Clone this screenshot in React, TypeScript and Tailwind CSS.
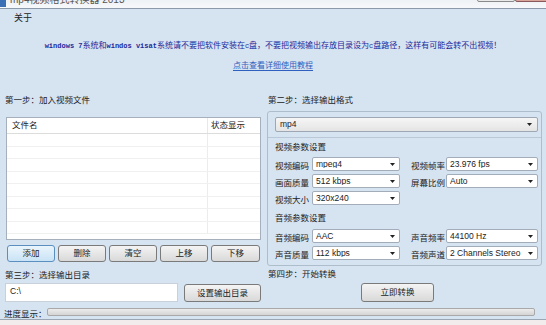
import React from "react";

function Sel({ value, w }: { value: string; w: string }) {
  return (
    <div
      className={`flex items-center h-[14px] bg-white border border-[#a3adba] rounded-[2px] pl-[3px] pr-[4px] ${w}`}
    >
      <span className="flex-1 text-[8.5px] leading-none text-[#222] whitespace-nowrap overflow-hidden">
        {value}
      </span>
      <svg width="5" height="3" viewBox="0 0 5 3">
        <path d="M0 0H5L2.5 3Z" fill="#222" />
      </svg>
    </div>
  );
}

function Btn({ label, w, focus }: { label: string; w: string; focus?: boolean }) {
  return (
    <div
      className={`flex items-center justify-center h-full rounded-[3px] border text-[8.5px] leading-none text-[#222] ${w} ${
        focus
          ? "border-[#5a8fc0] bg-linear-to-b from-[#eaf5fc] to-[#c9e3f5]"
          : "border-[#7a7a7a] bg-linear-to-b from-[#f4f4f4] to-[#d9d9d9]"
      }`}
    >
      {label}
    </div>
  );
}

function Label({ children }: { children: React.ReactNode }) {
  return <span className="text-[8.5px] leading-none text-[#222] whitespace-nowrap">{children}</span>;
}

export default function App() {
  const rows = Array.from({ length: 8 });
  return (
    <div className="relative w-[546px] h-[325px] overflow-hidden bg-[#f3eced] font-['Liberation_Sans','Noto_Sans_CJK_SC',sans-serif]">
      {/* title bar */}
      <div className="relative h-[9px] bg-linear-to-b from-[#eef1f5] to-[#f7f8fa] border-b border-[#8c99ab] overflow-hidden">
        <div className="absolute left-0 top-[-3px] w-[6px] h-[10px] bg-[#3a6fb5]" />
        <div className="absolute left-[10px] top-[-8px] text-[10px] text-[#555] whitespace-nowrap">
          mp4视频格式转换器 2013
        </div>
        <div className="absolute left-[477px] top-[-6px] w-[38px] h-[8px] border border-[#8a8a8a] rounded-[2px] bg-[#e9e9e9]" />
        <div className="absolute left-[515px] top-[-6px] w-[34px] h-[8px] border border-[#8a5a5a] rounded-[2px] bg-[#d8a49c]" />
      </div>

      {/* main content */}
      <div className="h-[311px] bg-[#d6e3f1] border-b border-[#9aa6b4] flex flex-col">
        <div className="h-[18px] flex items-center pl-[14px]">
          <span className="text-[9px] leading-none text-[#222]">关于</span>
        </div>

        <div className="mt-[13px] h-[12px] flex items-center justify-center text-[#1b2a9c] whitespace-nowrap">
          <span className="font-['Liberation_Mono',monospace] font-bold text-[7px] leading-none">windows 7</span>
          <span className="text-[8px] leading-none">系统和</span>
          <span className="font-['Liberation_Mono',monospace] font-bold text-[7px] leading-none">windos visat</span>
          <span className="text-[8px] leading-none">系统请不要把软件安装在</span>
          <span className="font-['Liberation_Mono',monospace] text-[7px] leading-none">c</span>
          <span className="text-[8px] leading-none">盘，不要把视频输出存放目录设为</span>
          <span className="font-['Liberation_Mono',monospace] text-[7px] leading-none">c</span>
          <span className="text-[8px] leading-none">盘路径，这样有可能会转不出视频！</span>
        </div>

        <div className="mt-[8px] h-[12px] flex items-center justify-center">
          <span className="text-[8px] leading-none text-[#2f5fbf] underline underline-offset-2">点击查看详细使用教程</span>
        </div>

        {/* two columns */}
        <div className="mt-[21px] flex pl-[5px] gap-[5px]">
          {/* left */}
          <div className="w-[257px] flex flex-col">
            <div className="h-[14px] flex items-center">
              <Label>第一步：加入视频文件</Label>
            </div>
            <div className="mt-[10px] ml-[1px] w-[255px] h-[123px] bg-white border border-[#a6b0bd] flex flex-col overflow-hidden">
              <div className="h-[16px] flex border-b border-[#dcdcdc] shrink-0">
                <div className="w-[201px] flex items-center pl-[5px] border-r border-[#e8e8e8]">
                  <Label>文件名</Label>
                </div>
                <div className="flex-1 flex items-center pl-[3px]">
                  <Label>状态显示</Label>
                </div>
              </div>
              {rows.map((_, i) => (
                <div key={i} className="h-[12.5px] flex border-b border-[#f0f0f0] shrink-0">
                  <div className="w-[201px] border-r border-[#ececec]" />
                  <div className="flex-1" />
                </div>
              ))}
            </div>
            <div className="mt-[5px] h-[17px] flex gap-[3px] pl-[2px]">
              <Btn label="添加" w="w-[48px]" focus />
              <Btn label="删除" w="w-[48px]" />
              <Btn label="清空" w="w-[48px]" />
              <Btn label="上移" w="w-[48px]" />
              <Btn label="下移" w="w-[49px]" />
            </div>
            <div className="mt-[6px] h-[14px] flex items-center">
              <Label>第三步：选择输出目录</Label>
            </div>
            <div className="mt-[1px] h-[19px] flex items-center">
              <div className="w-[173px] h-[19px] bg-white border border-[#c8d0da] flex items-start pl-[4px] pt-[3px]">
                <span className="text-[8.5px] leading-none text-[#222]">C:\</span>
              </div>
              <div className="ml-[6px] h-[18px] mt-[1px]">
                <Btn label="设置输出目录" w="w-[77px]" />
              </div>
            </div>
          </div>

          {/* right */}
          <div className="w-[275px] flex flex-col">
            <div className="h-[14px] flex items-center pl-[1px]">
              <Label>第二步：选择输出格式</Label>
            </div>
            <div className="mt-[4px] h-[155px] border border-[#aebdcc] rounded-[3px] flex flex-col pl-[7px] pr-[3px] pt-[5px]">
              <div className="flex items-center h-[15px] bg-linear-to-b from-[#f6f6f6] to-[#e4e4e4] border border-[#9ea8b4] rounded-[2px] pl-[4px] pr-[5px]">
                <span className="flex-1 text-[8.5px] leading-none text-[#222]">mp4</span>
                <svg width="5" height="3" viewBox="0 0 5 3">
                  <path d="M0 0H5L2.5 3Z" fill="#222" />
                </svg>
              </div>
              <div className="mt-[5px] -ml-[7px] -mr-[3px] border-t border-[#b9c7d6]" />
              <div className="mt-[2px] h-[14px] flex items-center">
                <Label>视频参数设置</Label>
              </div>
              <div className="mt-[3px] flex flex-col gap-[3px]">
                <div className="flex items-center h-[14px]">
                  <div className="w-[37px]"><Label>视频编码</Label></div>
                  <Sel value="mpeg4" w="w-[88px]" />
                  <div className="w-[35px] ml-[11px]"><Label>视频帧率</Label></div>
                  <Sel value="23.976 fps" w="w-[92px]" />
                </div>
                <div className="flex items-center h-[14px]">
                  <div className="w-[37px]"><Label>画面质量</Label></div>
                  <Sel value="512 kbps" w="w-[88px]" />
                  <div className="w-[35px] ml-[11px]"><Label>屏幕比例</Label></div>
                  <Sel value="Auto" w="w-[92px]" />
                </div>
                <div className="flex items-center h-[14px]">
                  <div className="w-[37px]"><Label>视频大小</Label></div>
                  <Sel value="320x240" w="w-[88px]" />
                </div>
              </div>
              <div className="mt-[6px] h-[14px] flex items-center">
                <Label>音频参数设置</Label>
              </div>
              <div className="mt-[4px] flex flex-col gap-[3px]">
                <div className="flex items-center h-[14px]">
                  <div className="w-[37px]"><Label>音频编码</Label></div>
                  <Sel value="AAC" w="w-[88px]" />
                  <div className="w-[35px] ml-[11px]"><Label>声音频率</Label></div>
                  <Sel value="44100 Hz" w="w-[92px]" />
                </div>
                <div className="flex items-center h-[14px]">
                  <div className="w-[37px]"><Label>声音质量</Label></div>
                  <Sel value="112 kbps" w="w-[88px]" />
                  <div className="w-[35px] ml-[11px]"><Label>音频声道</Label></div>
                  <Sel value="2 Channels Stereo" w="w-[92px]" />
                </div>
              </div>
            </div>
            <div className="mt-[1px] h-[14px] flex items-center pl-[1px]">
              <Label>第四步：开始转换</Label>
            </div>
            <div className="mt-[2px] h-[19px] pl-[94px]">
              <Btn label="立即转换" w="w-[73px]" />
            </div>
          </div>
        </div>

        {/* progress */}
        <div className="mt-[5px] h-[9px] flex items-center pl-[4px]">
          <div className="w-[43px]"><Label>进度显示：</Label></div>
          <div className="w-[488px] h-[8px] rounded-[2px] border border-[#a9a9a9] bg-linear-to-b from-[#ececec] to-[#d4d4d4]" />
        </div>
      </div>
    </div>
  );
}
